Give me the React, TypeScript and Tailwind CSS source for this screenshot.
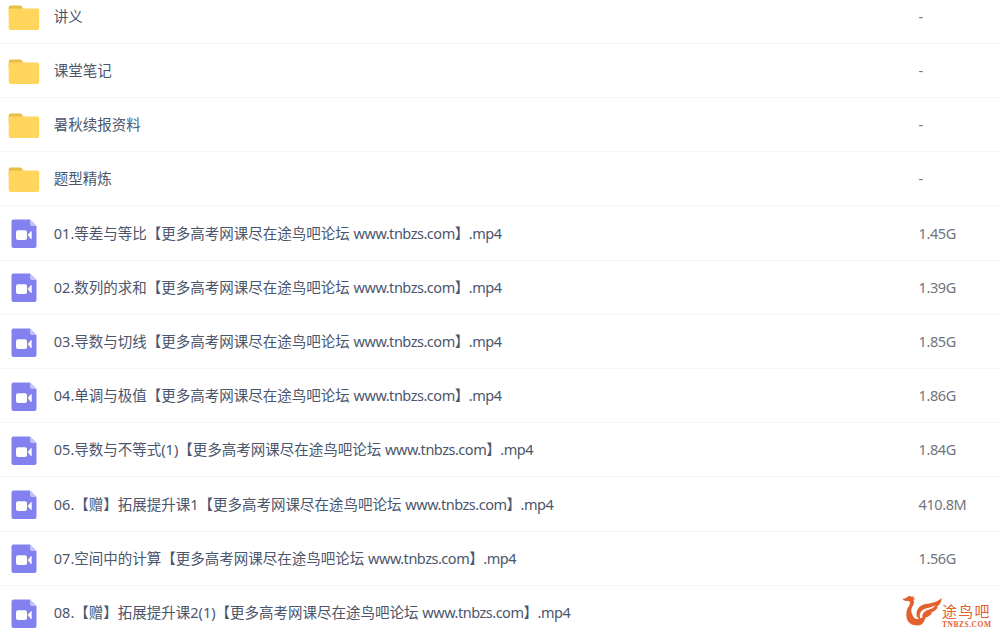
type FileEntry = {
  name: string;
  suffix?: string;
  size: string;
  type: "folder" | "video";
};

const SUFFIX = "www.tnbzs.com】.mp4";

const files: FileEntry[] = [
  { name: "讲义", size: "-", type: "folder" },
  { name: "课堂笔记", size: "-", type: "folder" },
  { name: "暑秋续报资料", size: "-", type: "folder" },
  { name: "题型精炼", size: "-", type: "folder" },
  { name: "01.等差与等比【更多高考网课尽在途鸟吧论坛 ", suffix: SUFFIX, size: "1.45G", type: "video" },
  { name: "02.数列的求和【更多高考网课尽在途鸟吧论坛 ", suffix: SUFFIX, size: "1.39G", type: "video" },
  { name: "03.导数与切线【更多高考网课尽在途鸟吧论坛 ", suffix: SUFFIX, size: "1.85G", type: "video" },
  { name: "04.单调与极值【更多高考网课尽在途鸟吧论坛 ", suffix: SUFFIX, size: "1.86G", type: "video" },
  { name: "05.导数与不等式(1)【更多高考网课尽在途鸟吧论坛 ", suffix: SUFFIX, size: "1.84G", type: "video" },
  { name: "06.【赠】拓展提升课1【更多高考网课尽在途鸟吧论坛 ", suffix: SUFFIX, size: "410.8M", type: "video" },
  { name: "07.空间中的计算【更多高考网课尽在途鸟吧论坛 ", suffix: SUFFIX, size: "1.56G", type: "video" },
  { name: "08.【赠】拓展提升课2(1)【更多高考网课尽在途鸟吧论坛 ", suffix: SUFFIX, size: "", type: "video" },
];

function FolderIcon() {
  return (
    <svg width="32" height="26" viewBox="0 0 32 26" className="block">
      <path d="M.7 2.500Q.7.500 2.700.500h9.500q1.300 0 1.900 1.100L15.700 4.500V10H.7z" fill="#e5bd48" />
      <path d="M.7 5.500Q.7 3.500 2.700 3.500h26.500q2 0 2 2V23q0 2-2 2H2.700q-2 0-2-2z" fill="#ffd65b" />
    </svg>
  );
}

function VideoIcon() {
  return (
    <svg width="26" height="30" viewBox="0 0 26 30" className="block">
      <path d="M2.500 .5H19L25.500 7v20q0 2-2 2h-21q-2 0-2-2V2.500q0-2 2-2z" fill="#8381ef" />
      <path d="M19 .5L25.500 7H21q-2 0-2-2z" fill="#c3c1fa" />
      <rect x="5" y="11.300" width="11" height="9.700" rx="2" fill="#fff" />
      <path d="M16.700 16l3-3.500q1-.9 1 .3v6.600q0 1.200-1 .3z" fill="#fff" />
    </svg>
  );
}

function FileRow({ file }: { file: FileEntry }) {
  return (
    <li className="flex h-[54.200px] shrink-0 items-center border-b border-[#f4f5f7]">
      <div className="flex w-[53.800px] shrink-0 pt-[2.500px]">
        <div className={file.type === "folder" ? "ml-2" : "ml-[10.500px]"}>
          {file.type === "folder" ? <FolderIcon /> : <VideoIcon />}
        </div>
      </div>
      <span className="flex-1 whitespace-pre pt-px text-[#4b566d]">
        {file.name}
        {file.suffix && <span className="tracking-[-0.480px]">{file.suffix}</span>}
      </span>
      <span className="w-[81.500px] pt-px tracking-[-0.400px] text-[#70757e]">{file.size}</span>
    </li>
  );
}

function BrandMark() {
  return (
    <div className="absolute right-0 bottom-0 flex h-[40px] w-[100px] text-[#e4602f]">
      <svg width="42" height="40" viewBox="0 0 126 120" className="shrink-0" fill="currentColor">
        {/* Head, neck and curled body */}
        <path d="M7 20C13 21 17 18 21 16C25 12 31 11 35 14L44 13L39 18L46 20L40 24C44 31 42 36 38 42C33 50 33 58 36 66C40 78 48 83 57 80C50 76 48 69 50 60C53 44 66 37 82 35C99 33 113 29 125 17C125 30 119 39 110 44L114 45C110 54 101 59 93 61L96 63C91 71 84 75 76 77C73 94 61 103 47 100C30 98 20 87 19 71C18 58 22 49 28 40C32 33 30 28 25 27C18 28 11 26 7 20Z" />
        {/* Slit under the top feather */}
        <path d="M61 79C57 68 61 58 72 52C83 47 96 47 107 40C99 52 84 52 76 58C68 63 66 70 67 77Z" fill="#fff" />
      </svg>
      <div className="pt-[12px]">
        <div className="text-[15px] leading-[15px] tracking-[1.200px] whitespace-nowrap">途鸟吧</div>
        <svg width="52" height="9" viewBox="0 0 52 9" className="block" fill="currentColor">
          <text x="0" y="7.500" textLength="49" fontSize="7.500" fontWeight="700" fontFamily="Liberation Serif, serif">
            TNBZS.COM
          </text>
        </svg>
      </div>
    </div>
  );
}

export default function App() {
  return (
    <main className="relative h-[632px] w-full overflow-hidden bg-white font-['Noto_Sans','Noto_Sans_CJK_SC',sans-serif] text-[14.500px]">
      <ul className="-mt-[10.300px] flex flex-col">
        {files.map((file) => (
          <FileRow key={file.size + file.name} file={file} />
        ))}
      </ul>
      <BrandMark />
    </main>
  );
}
